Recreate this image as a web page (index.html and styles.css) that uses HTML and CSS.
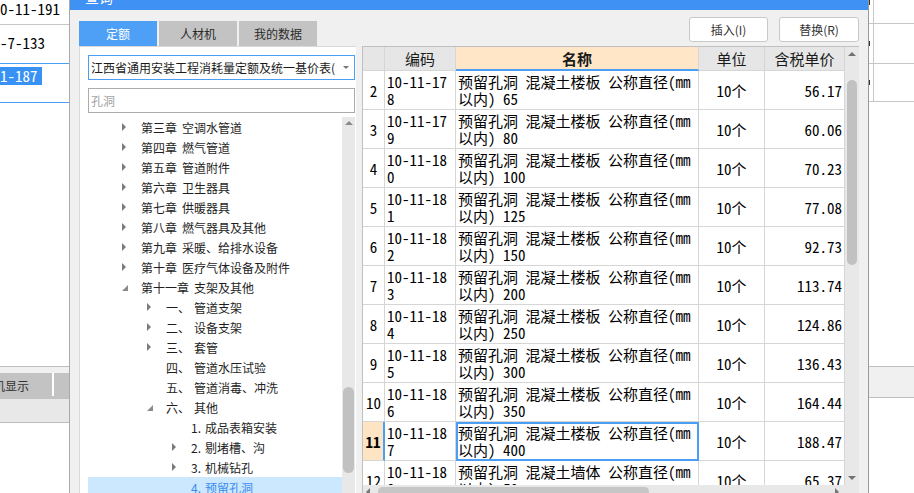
FILE: index.html
```html
<!DOCTYPE html>
<html lang="zh-CN">
<head>
<meta charset="utf-8">
<title>查询</title>
<link rel="stylesheet" href="styles.css">
</head>
<body>
<div class="screen">
  <div class="bg-left">
    <div class="bgrow r1">0-11-191</div>
    <div class="bgrow r2">-7-133</div>
    <div class="bgrow r3"><span class="edit">1-187</span></div>
    <div class="bg-fill"></div>
    <div class="bg-strip"></div>
    <div class="bg-tabs"><div class="bg-tab"><span>机显示</span></div><div class="bg-tab-sep"></div></div>
    <div class="bg-bar"></div>
  </div>

  <div class="dialog">
    <div class="titlebar"><span>查询</span></div>
    <div class="dbody">
      <div class="toprow">
        <div class="tabs">
          <div class="tab active">定额</div>
          <div class="tab">人材机</div>
          <div class="tab">我的数据</div>
        </div>
        <div class="buttons">
          <div class="btn">插入(I)</div>
          <div class="btn wide">替换(R)</div>
        </div>
      </div>
      <div class="main">
        <div class="leftpanel">
          <div class="combo"><span class="combo-text">江西省通用安装工程消耗量定额及统一基价表(</span><span class="combo-arrow"></span></div>
          <div class="search">孔洞</div>
          <div class="tree">
            <div class="tree-list">
              <div class="trow l1"><span class="ar"><i class="tri-r"></i></span><span class="n">第三章</span>空调水管道</div>
              <div class="trow l1"><span class="ar"><i class="tri-r"></i></span><span class="n">第四章</span>燃气管道</div>
              <div class="trow l1"><span class="ar"><i class="tri-r"></i></span><span class="n">第五章</span>管道附件</div>
              <div class="trow l1"><span class="ar"><i class="tri-r"></i></span><span class="n">第六章</span>卫生器具</div>
              <div class="trow l1"><span class="ar"><i class="tri-r"></i></span><span class="n">第七章</span>供暖器具</div>
              <div class="trow l1"><span class="ar"><i class="tri-r"></i></span><span class="n">第八章</span>燃气器具及其他</div>
              <div class="trow l1"><span class="ar"><i class="tri-r"></i></span><span class="n">第九章</span>采暖、给排水设备</div>
              <div class="trow l1"><span class="ar"><i class="tri-r"></i></span><span class="n">第十章</span>医疗气体设备及附件</div>
              <div class="trow l1"><span class="ar"><i class="tri-d"></i></span><span class="n">第十一章</span>支架及其他</div>
              <div class="trow l2"><span class="ar"><i class="tri-r"></i></span><span class="k">一、</span>管道支架</div>
              <div class="trow l2"><span class="ar"><i class="tri-r"></i></span><span class="k">二、</span>设备支架</div>
              <div class="trow l2"><span class="ar"><i class="tri-r"></i></span><span class="k">三、</span>套管</div>
              <div class="trow l2"><span class="ar"></span><span class="k">四、</span>管道水压试验</div>
              <div class="trow l2"><span class="ar"></span><span class="k">五、</span>管道消毒、冲洗</div>
              <div class="trow l2"><span class="ar"><i class="tri-d"></i></span><span class="k">六、</span>其他</div>
              <div class="trow l3"><span class="ar"></span><span class="d">1.</span>成品表箱安装</div>
              <div class="trow l3"><span class="ar"><i class="tri-r"></i></span><span class="d">2.</span>剔堵槽、沟</div>
              <div class="trow l3"><span class="ar"><i class="tri-r"></i></span><span class="d">3.</span>机械钻孔</div>
              <div class="trow l3 sel"><span class="ar"></span><span class="d">4.</span>预留孔洞</div>
            </div>
            <div class="tscroll"><i class="ta-up"></i><i class="tthumb"></i></div>
          </div>
        </div>

        <div class="grid">
          <div class="grid-main">
            <div class="tbl">
              <div class="c hd"></div>
              <div class="c hd">编码</div>
              <div class="c hd cur">名称</div>
              <div class="c hd">单位</div>
              <div class="c hd">含税单价</div>

              <div class="c num">2</div><div class="c code">10-11-17<br>8</div><div class="c name">预留孔洞 混凝土楼板 公称直径(mm<br>以内) 65</div><div class="c unit">10个</div><div class="c price">56.17</div>
              <div class="c num">3</div><div class="c code">10-11-17<br>9</div><div class="c name">预留孔洞 混凝土楼板 公称直径(mm<br>以内) 80</div><div class="c unit">10个</div><div class="c price">60.06</div>
              <div class="c num">4</div><div class="c code">10-11-18<br>0</div><div class="c name">预留孔洞 混凝土楼板 公称直径(mm<br>以内) 100</div><div class="c unit">10个</div><div class="c price">70.23</div>
              <div class="c num">5</div><div class="c code">10-11-18<br>1</div><div class="c name">预留孔洞 混凝土楼板 公称直径(mm<br>以内) 125</div><div class="c unit">10个</div><div class="c price">77.08</div>
              <div class="c num">6</div><div class="c code">10-11-18<br>2</div><div class="c name">预留孔洞 混凝土楼板 公称直径(mm<br>以内) 150</div><div class="c unit">10个</div><div class="c price">92.73</div>
              <div class="c num">7</div><div class="c code">10-11-18<br>3</div><div class="c name">预留孔洞 混凝土楼板 公称直径(mm<br>以内) 200</div><div class="c unit">10个</div><div class="c price">113.74</div>
              <div class="c num">8</div><div class="c code">10-11-18<br>4</div><div class="c name">预留孔洞 混凝土楼板 公称直径(mm<br>以内) 250</div><div class="c unit">10个</div><div class="c price">124.86</div>
              <div class="c num">9</div><div class="c code">10-11-18<br>5</div><div class="c name">预留孔洞 混凝土楼板 公称直径(mm<br>以内) 300</div><div class="c unit">10个</div><div class="c price">136.43</div>
              <div class="c num">10</div><div class="c code">10-11-18<br>6</div><div class="c name">预留孔洞 混凝土楼板 公称直径(mm<br>以内) 350</div><div class="c unit">10个</div><div class="c price">164.44</div>
              <div class="c num cur">11</div><div class="c code">10-11-18<br>7</div><div class="c name cur">预留孔洞 混凝土楼板 公称直径(mm<br>以内) 400</div><div class="c unit">10个</div><div class="c price">188.47</div>
              <div class="c num">12</div><div class="c code">10-11-18<br>8</div><div class="c name">预留孔洞 混凝土墙体 公称直径(mm<br>以内) 50</div><div class="c unit">10个</div><div class="c price">65.37</div>
            </div>
            <div class="hscroll"><i class="ha-l"></i><i class="hthumb"></i><i class="hspace"></i><i class="ha-r"></i></div>
          </div>
          <div class="vscroll"><i class="va-up"></i><i class="vthumb"></i><i class="vspace"></i><i class="va-dn"></i><i class="vcorner"></i></div>
        </div>
      </div>
    </div>
  </div>

  <div class="bg-right">
    <div class="rrow rr1"><div class="rn"><i class="frag"></i></div><div class="rw"></div></div>
    <div class="rrow rr2"><div class="rn"><i class="frag"></i></div><div class="rw"></div></div>
    <div class="rrow rr3"><div class="rn"><i class="frag"></i></div><div class="rw"></div></div>
    <div class="r-fill"></div>
    <div class="r-strip"></div>
  </div>
</div>
</body>
</html>
```

FILE: styles.css
```css
:root {
  --mono: "Noto Sans Mono CJK SC", "Noto Sans CJK SC", "Liberation Mono", monospace;
  --blue: #4a9ff5;
}
* { box-sizing: border-box; margin: 0; padding: 0; }
html, body { width: 914px; height: 493px; overflow: hidden; background: #fff; }
body { font-family: "Noto Sans CJK SC", "Microsoft YaHei", sans-serif; font-size: 12px; color: #1f1f1f; }
i { display: block; font-style: normal; }

.screen { display: flex; align-items: flex-start; width: 914px; height: 493px; overflow: hidden; }

/* ---------- background application, left ---------- */
.bg-left { width: 69px; height: 493px; flex: none; display: flex; flex-direction: column; overflow: hidden; }
.bgrow { flex: none; white-space: nowrap; overflow: hidden; font-family: var(--mono); font-size: 15px; color: #000; }
.r1 { height: 25px; line-height: 18px; border-bottom: 1px solid #c6c6c6; }
.r2 { height: 39px; line-height: 36px; border-bottom: 1px solid var(--blue); }
.r3 { height: 39px; padding-top: 1px; border-bottom: 1px solid var(--blue); }
.edit { display: inline-block; line-height: 18px; background: #3892f5; color: #fff; padding-right: 4px; }
.bg-fill { height: 263px; flex: none; }
.bg-strip { height: 7px; flex: none; border-top: 1px solid #bdbdbd; background: #f0f0f0; }
.bg-tabs { height: 26px; flex: none; background: #c3c3c3; display: flex; }
.bg-tab { width: 52px; flex: none; overflow: hidden; white-space: nowrap; line-height: 26px; color: #333; }
.bg-tab span { display: inline-block; margin-left: -7px; }
.bg-tab-sep { width: 2px; height: 23px; background: #fff; flex: none; }
.bg-bar { height: 24px; flex: none; background: #e8e8e8; border-bottom: 1px solid #bdbdbd; }

/* ---------- dialog ---------- */
.dialog { width: 800px; height: 498px; flex: none; display: flex; flex-direction: column; background: #f0f0f0; border-left: 1px solid #a9a9a9; border-right: 1px solid #9a9a9a; }
.titlebar { height: 10px; flex: none; background: #3f91f3; overflow: hidden; padding-left: 15px; color: #fff; font-size: 14px; }
.titlebar span { display: block; line-height: 16px; margin-top: -11px; }
.dbody { flex: 1; display: flex; flex-direction: column; padding: 0 9px; }

.toprow { height: 36px; flex: none; display: flex; justify-content: space-between; }
.tabs { display: flex; gap: 2px; align-self: flex-end; }
.tab { width: 78px; height: 25px; display: flex; align-items: center; justify-content: center; background: #c3c3c3; color: #2a2a2a; font-size: 12px; }
.tab.active { background: #4da0f6; color: #fff; }
.buttons { display: flex; gap: 11px; margin-top: 7px; }
.btn { width: 79px; height: 25px; border: 1px solid #c9c9c9; border-radius: 3px; background: #fff; display: flex; align-items: center; justify-content: center; color: #333; font-size: 12px; }
.btn.wide { width: 80px; }

.main { display: flex; gap: 6px; height: 452px; flex: none; }

/* left panel */
.leftpanel { width: 277px; flex: none; background: #fff; border-left: 1px solid #d9d9d9; border-top: 1px solid #d9d9d9; padding: 8px 1px 0 8px; display: flex; flex-direction: column; }
.combo { height: 25px; flex: none; border: 1px solid var(--blue); display: flex; align-items: center; justify-content: space-between; padding: 0 5px 0 2px; }
.combo-text { white-space: nowrap; overflow: hidden; color: #1a1a1a; }
.combo-arrow { width: 0; height: 0; border-left: 3px solid transparent; border-right: 3px solid transparent; border-top: 3px solid #777; flex: none; }
.search { height: 25px; flex: none; margin-top: 8px; border: 1px solid #ababab; padding-left: 2px; line-height: 23px; color: #a3a3a3; }
.tree { margin-top: 4px; flex: 1; display: flex; min-height: 0; }
.tree-list { flex: 1; overflow: hidden; }
.trow { height: 20px; display: flex; align-items: center; white-space: nowrap; color: #1e1e1e; }
.trow.l1 { padding-left: 34px; }
.trow.l2 { padding-left: 59px; }
.trow.l3 { padding-left: 84px; }
.trow.sel { background: #cce8ff; color: #3a8cf0; }
.ar { width: 19px; flex: none; display: flex; align-items: center; height: 20px; }
.tri-r { width: 0; height: 0; border-top: 4px solid transparent; border-bottom: 4px solid transparent; border-left: 4px solid #7b7b7b; }
.tri-d { width: 6px; height: 6px; margin-top: 2px; background: #8a8a8a; clip-path: polygon(100% 0, 100% 100%, 0 100%); }
.n { margin-right: 5px; }
.k { width: 28px; flex: none; }
.d { width: 14px; flex: none; }
.tscroll { width: 13px; flex: none; background: #e8e8e8; display: flex; flex-direction: column; align-items: center; }
.ta-up { margin-top: 4px; width: 0; height: 0; border-left: 4px solid transparent; border-right: 4px solid transparent; border-bottom: 4px solid #8a8a8a; }
.tthumb { width: 11px; height: 86px; margin-top: 262px; border-radius: 6px; background: #c1c1c1; }

/* grid */
.grid { flex: 1; display: flex; background: #fff; border-left: 1px solid #c0c0c0; border-top: 1px solid #c0c0c0; }
.grid-main { width: 482px; flex: none; display: flex; flex-direction: column; }
.tbl { flex: 1; min-height: 0; overflow: hidden; display: grid; grid-template-columns: 22px 71px 243px 66px 80px; grid-template-rows: 24px; grid-auto-rows: 39px; align-content: start; font-family: var(--mono); font-size: 15px; color: #000; }
.c { border-right: 1px solid #d6d6d6; border-bottom: 1px solid #d6d6d6; overflow: hidden; white-space: nowrap; display: flex; flex-direction: column; justify-content: center; line-height: 17px; }
.hd { background: #e6e6e6; align-items: center; color: #1a1a1a; }
.hd.cur { background: #fee6c7; font-weight: bold; border-bottom: 2px solid var(--blue); }
.num { align-items: center; }
.num.cur { background: #fde4c3; font-weight: bold; border-right: 2px solid var(--blue); }
.code, .name { padding-left: 2px; }
.name.cur { outline: 2px solid var(--blue); outline-offset: -2px; }
.unit { align-items: center; }
.price { align-items: flex-end; padding-right: 2px; }

.hscroll { height: 13px; flex: none; background: #e8e8e8; display: flex; align-items: center; padding: 0 6px 0 3px; }
.ha-l { width: 0; height: 0; border-top: 4px solid transparent; border-bottom: 4px solid transparent; border-right: 4px solid #777; }
.hthumb { width: 271px; height: 9px; margin-left: 8px; border-radius: 5px; background: #c6c6c6; }
.hspace { flex: 1; }
.ha-r { width: 0; height: 0; border-top: 4px solid transparent; border-bottom: 4px solid transparent; border-left: 4px solid #777; }

.vscroll { flex: 1; background: #e8e8e8; display: flex; flex-direction: column; align-items: center; }
.va-up { margin-top: 5px; width: 0; height: 0; border-left: 4px solid transparent; border-right: 4px solid transparent; border-bottom: 4px solid #707070; }
.vthumb { width: 10px; height: 185px; margin-top: 24px; border-radius: 5px; background: #c1c1c1; }
.vspace { flex: 1; }
.va-dn { margin-bottom: 5px; width: 0; height: 0; border-left: 4px solid transparent; border-right: 4px solid transparent; border-top: 4px solid #707070; }
.vcorner { height: 13px; flex: none; }

/* ---------- background application, right ---------- */
.bg-right { flex: 1; height: 493px; display: flex; flex-direction: column; }
.rrow { display: flex; flex: none; border-bottom: 1px solid #c6c6c6; }
.rr1 { height: 24px; }
.rr2 { height: 40px; }
.rr3 { height: 38px; }
.rn { width: 5px; flex: none; border-right: 1px solid #c8c8c8; display: flex; align-items: center; }
.rr1 .rn { align-items: flex-start; }
.rw { flex: 1; }
.frag { width: 1px; height: 5px; background: #333; }
.r-fill { height: 264px; flex: none; }
.r-strip { height: 32px; flex: none; border-top: 1px solid #bdbdbd; border-bottom: 1px solid #bdbdbd; background: #f0f0f0; }
```
